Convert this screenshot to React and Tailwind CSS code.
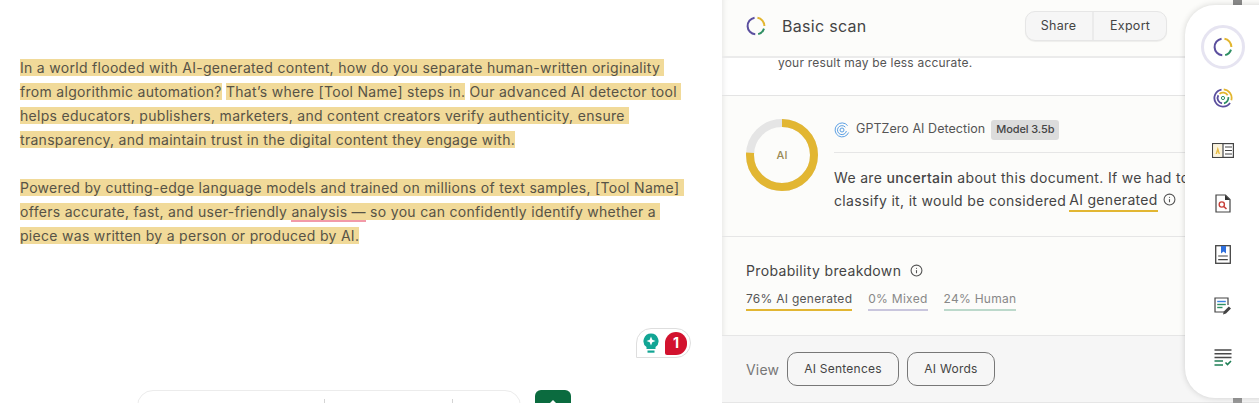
import { Info } from 'lucide-react'

const HL = 'bg-[#f1da99]'

function Arc({ r, c, color, from, to, w }) {
  // 시계 방향 호 (각도는 12시 기준)
  const p = (a) => {
    const t = ((a - 90) * Math.PI) / 180
    return `${c + r * Math.cos(t)} ${c + r * Math.sin(t)}`
  }
  return <path d={`M${p(from)} A${r} ${r} 0 ${to - from > 180 ? 1 : 0} 1 ${p(to)}`} fill="none" stroke={color} strokeWidth={w} />
}

function RingLogo({ size = 20 }) {
  return (
    <svg width={size} height={size} viewBox="0 0 20 20">
      <Arc c={10} r={8.4} w={2} color="#e3b62f" from={10} to={90} />
      <Arc c={10} r={8.4} w={2} color="#2f8f63" from={108} to={165} />
      <Arc c={10} r={8.4} w={2} color="#5b4f9e" from={185} to={350} />
    </svg>
  )
}

function Donut() {
  return (
    <div className="relative w-[72px] h-[72px] shrink-0">
      <svg width="72" height="72" viewBox="0 0 72 72">
        <circle cx="36" cy="36" r="32" fill="none" stroke="#e5e5e5" strokeWidth="8" />
        <circle cx="36" cy="36" r="32" fill="none" stroke="#e2b632" strokeWidth="8" strokeDasharray="152.8 201.1" transform="rotate(-90 36 36)" />
      </svg>
      <span className="absolute inset-0 flex items-center justify-center text-[11px] font-medium text-[#9a8a55]">AI</span>
    </div>
  )
}

function GptZeroIcon() {
  return (
    <svg width="16" height="16" viewBox="0 0 16 16" fill="none" stroke="#5b9fe3" strokeWidth="1">
      <path d="M13.6 3.6A7 7 0 1 0 14.6 10.5" />
      <path d="M11.4 5.2A4.5 4.5 0 1 0 12.4 9" />
      <circle cx="8" cy="8" r="2" />
    </svg>
  )
}

function ScanIcon() {
  return (
    <svg width="20" height="20" viewBox="0 0 20 20">
      <Arc c={10} r={8.6} w={1.8} color="#e3b62f" from={5} to={105} />
      <Arc c={10} r={8.6} w={1.8} color="#5b4f9e" from={125} to={350} />
      <Arc c={10} r={5.4} w={1.8} color="#5b4f9e" from={190} to={300} />
      <Arc c={10} r={5.4} w={1.8} color="#e3b62f" from={320} to={420} />
      <Arc c={10} r={5.4} w={1.8} color="#2f8f63" from={80} to={170} />
      <circle cx="10" cy="10" r="1.6" fill="none" stroke="#2f8f63" strokeWidth="1" />
    </svg>
  )
}

function ReaderIcon() {
  return (
    <svg width="22" height="15" viewBox="0 0 22 15" fill="none">
      <rect x="0.6" y="0.6" width="20.8" height="13.8" stroke="#444" strokeWidth="1.2" />
      <rect x="1.2" y="1.2" width="9" height="12.6" fill="#fbf3dc" />
      <path d="M11 0.6V14.4" stroke="#444" strokeWidth="1.2" />
      <path d="M3.5 11L5.8 3.8L8 11H6.6L5.8 8.6L5 11Z" fill="#e8bd45" />
      <path d="M13 4H20M13 7.5H20M13 11H20" stroke="#444" strokeWidth="1.1" />
    </svg>
  )
}

function PlagiarismIcon() {
  return (
    <svg width="16" height="19" viewBox="0 0 16 19" fill="none">
      <path d="M1 1H10.5L15 5.5V18H1Z" stroke="#444" strokeWidth="1.2" />
      <path d="M10 1L15 6H10Z" fill="#333" />
      <circle cx="6.8" cy="10.5" r="2.6" stroke="#c8403a" strokeWidth="1.4" />
      <path d="M8.8 12.5L11.5 15" stroke="#c8403a" strokeWidth="1.6" />
    </svg>
  )
}

function CiteIcon() {
  return (
    <svg width="16" height="19" viewBox="0 0 16 19" fill="none">
      <rect x="0.7" y="0.7" width="14.6" height="17.6" stroke="#444" strokeWidth="1.3" />
      <path d="M6 1H11V8.5L8.5 6.5L6 8.5Z" fill="#2f6fdc" />
      <path d="M3.2 11H12.8M3.2 14.6H12.8" stroke="#444" strokeWidth="1.2" />
    </svg>
  )
}

function WriteIcon() {
  return (
    <svg width="18" height="19" viewBox="0 0 18 19" fill="none">
      <path d="M10 15H1V1H14V8" stroke="#444" strokeWidth="1.2" />
      <path d="M3.2 4.5H11.8" stroke="#3b82e0" strokeWidth="1.4" />
      <path d="M3.2 7.5H11.8" stroke="#2f8f63" strokeWidth="1.4" />
      <path d="M3.2 10.5H8.5" stroke="#2f8f63" strokeWidth="1.4" />
      <path d="M9 17.5L9.8 14.5L14.8 9.5L17 11.6L12 16.6Z" fill="#444" />
    </svg>
  )
}

function ListCheckIcon() {
  return (
    <svg width="18" height="18" viewBox="0 0 18 18" fill="none">
      <path d="M0.5 1H17.5M0.5 4.7H17.5M0.5 8.4H17.5" stroke="#4a4a4a" strokeWidth="1.5" />
      <path d="M0.5 12H9M0.5 16H9" stroke="#1f7f55" strokeWidth="1.7" />
      <path d="M11.5 13.5L13.5 15.5L17 12" stroke="#1f7f55" strokeWidth="1.6" />
    </svg>
  )
}

function Sidebar() {
  return (
    <div className="absolute left-[1185px] top-[5px] bottom-[5px] w-[90px] bg-white rounded-l-[30px] shadow-[0_0_6px_rgba(0,0,0,0.16)] flex flex-col">
      <div className="w-[76px] flex flex-col items-center pt-[20px]">
        <div className="w-[44px] h-[44px] rounded-full border-[3px] border-[#e6e4f1] flex items-center justify-center">
          <RingLogo />
        </div>
        <div className="mt-[19px] h-[20px] flex items-center"><ScanIcon /></div>
        <div className="mt-[35px] h-[15px] flex items-center"><ReaderIcon /></div>
        <div className="mt-[36px] h-[19px] flex items-center"><PlagiarismIcon /></div>
        <div className="mt-[32px] h-[19px] flex items-center"><CiteIcon /></div>
        <div className="mt-[33px] h-[19px] flex items-center"><WriteIcon /></div>
        <div className="mt-[33px] h-[18px] flex items-center"><ListCheckIcon /></div>
      </div>
    </div>
  )
}

function Editor() {
  return (
    <div className="relative w-[722px] shrink-0 bg-white pt-[56px] pl-[20px] text-[14px] leading-[24px] tracking-[0.3px] text-[#575346] whitespace-pre">
      <div><span className={HL}>In a world flooded with AI-generated content, how do you separate human-written originality </span></div>
      <div><span className={HL}>from algorithmic automation?</span> <span className={HL}>That’s where [Tool Name] steps in.</span> <span className={HL}>Our advanced AI detector tool </span></div>
      <div><span className={HL}>helps educators, publishers, marketers, and content creators verify authenticity, ensure </span></div>
      <div><span className={HL}>transparency, and maintain trust in the digital content they engage with.</span></div>
      <div className="mt-[24px]"><span className={HL}>Powered by cutting-edge language models and trained on millions of text samples, [Tool Name] </span></div>
      <div><span className={HL}>offers accurate, fast, and user-friendly <span className="border-b-2 border-[#f29aa8]">analysis —</span> so you can confidently identify whether a </span></div>
      <div><span className={HL}>piece was written by a person or produced by AI.</span></div>

      {/* 제안 배지 */}
      <div className="absolute left-[636px] top-[328px] w-[55px] h-[30px] bg-white border border-[#dedede] rounded-t-[15px] rounded-br-[15px] flex items-center pl-[6px] gap-[6px]">
        <svg width="16" height="21" viewBox="0 0 16 21">
          <path d="M8 0.5A7.5 7.5 0 0 1 12.5 14V16H3.5V14A7.5 7.5 0 0 1 8 0.5Z" fill="#12a594" />
          <path d="M8 3.5L9.3 6.7L12.5 8L9.3 9.3L8 12.5L6.7 9.3L3.5 8L6.7 6.7Z" fill="#fff" />
          <rect x="4.5" y="17.5" width="7" height="2.2" fill="#12a594" />
        </svg>
        <span className="w-[22px] h-[23px] bg-[#d2122e] rounded-t-[11px] rounded-br-[11px] rounded-bl-[2px] text-white text-[14px] font-bold flex items-center justify-center tracking-normal">1</span>
      </div>

      {/* 하단 툴바 */}
      <div className="absolute left-[137px] top-[390px] w-[384px] h-[40px] bg-white border border-[#ececec] rounded-[16px] flex items-start pt-[8px]">
        <div className="ml-[186px] w-px h-[10px] bg-[#d4d4d4]" />
        <div className="ml-[127px] w-px h-[10px] bg-[#d4d4d4]" />
      </div>
      <div className="absolute left-[535px] top-[390px] w-[36px] h-[36px] bg-[#0b6b3f] rounded-[6px] flex justify-center pt-[10px]">
        <div className="w-0 h-0 border-x-[4px] border-x-transparent border-b-[4px] border-b-white" />
      </div>
    </div>
  )
}

function Panel() {
  return (
    <div className="flex-1 flex flex-col bg-[#fcfcfa] text-[#444] shadow-[inset_6px_0_6px_-6px_rgba(0,0,0,0.12)] overflow-hidden">
      {/* 상단 바 */}
      <div className="h-[58px] shrink-0 border-b-2 border-[#ebebeb] flex items-center pl-[24px] pb-[4px]">
        <RingLogo />
        <h1 className="ml-[16px] text-[16px] tracking-[0.3px] text-[#444] font-normal">Basic scan</h1>
        <div className="ml-[158px] flex h-[30px] rounded-[10px] border border-[#e6e6e6] bg-[#f6f6f6] text-[12.5px] tracking-[0.3px] shadow-[0_1px_1px_rgba(0,0,0,0.06)]">
          <span className="w-[68px] flex items-center justify-center border-r-2 border-[#ebebeb]">Share</span>
          <span className="w-[72px] pl-px flex items-center justify-center">Export</span>
        </div>
      </div>

      <div className="h-[38px] shrink-0 bg-white border-b border-[#e4e4e4] pl-[56px] text-[12px] leading-[10px] tracking-[0.2px] text-[#555] shadow-[inset_6px_0_6px_-6px_rgba(0,0,0,0.12)]">
        your result may be less accurate.
      </div>

      {/* 탐지 결과 */}
      <div className="h-[141px] shrink-0 border-b border-[#e6e6e6] pl-[24px] flex items-start pt-[23px]">
        <Donut />
        <div className="ml-[16px] w-[600px]">
          <div className="h-[24px] pb-[3px] flex items-center">
            <GptZeroIcon />
            <span className="ml-[6px] text-[12.5px] tracking-[0.05px] text-[#555]">GPTZero AI Detection</span>
            <span className="ml-[6px] px-[5px] h-[20px] flex items-center rounded-[3px] bg-[#dcdcdc] text-[11px] font-medium tracking-[-0.1px] text-[#444]">Model 3.5b</span>
          </div>
          <div className="mt-[9px] border-t border-[#e6e6e6] pt-[13px] text-[14px] leading-[24px] tracking-[0.33px]">
            <div>We are <span className="font-medium">uncertain</span> about this document. If we had to</div>
            <div className="flex items-center -mt-px">
              classify it, it would be considered
              <span className="ml-[3px] leading-[20px] border-b-2 border-[#e2b632] tracking-[0.3px]">AI generated</span>
              <Info className="ml-[5px] -mt-[3px] w-[13px] h-[13px] text-[#555]" />
            </div>
          </div>
        </div>
      </div>

      {/* 확률 */}
      <div className="h-[99px] shrink-0 pl-[24px] pt-[23px] border-b border-[#e6e6e6]">
        <div className="flex items-center text-[14px] tracking-[0.35px] h-[21px]">
          Probability breakdown
          <Info className="ml-[9px] w-[13px] h-[13px] text-[#555]" />
        </div>
        <div className="mt-[9px] flex gap-[16px] text-[12px] tracking-[0.27px] leading-[18px]">
          <span className="pb-[1px] border-b-2 border-[#e2b632] text-[#555]">76% AI generated</span>
          <span className="pb-[1px] border-b-2 border-[#c9c6dd] text-[#888]">0% Mixed</span>
          <span className="pb-[1px] border-b-2 border-[#bcd9cb] text-[#888]">24% Human</span>
        </div>
      </div>

      {/* 보기 */}
      <div className="flex-1 bg-[#f6f6f6] pl-[24px] pt-[16px] flex items-start border-b border-[#e6e6e6]">
        <span className="w-[41px] h-[34px] flex items-center text-[14px] tracking-[0.2px] text-[#777]">View</span>
        <button className="h-[34px] w-[112px] rounded-[10px] border border-[#777] text-[12px] tracking-[0.25px]">AI Sentences</button>
        <button className="ml-[8px] h-[34px] w-[88px] rounded-[10px] border border-[#777] text-[12px] tracking-[0.25px]">AI Words</button>
      </div>
    </div>
  )
}

export default function App() {
  return (
    <div className="relative flex w-[1259px] h-[403px] overflow-hidden font-['Inter',sans-serif]">
      <Editor />
      <Panel />
      {/* 사이드바 뒤 스크롤바 */}
      <div className="absolute left-[1233px] top-0 w-[9px] h-[5px] bg-[#8a8a8a]" />
      <div className="absolute left-[1233px] bottom-0 w-[9px] h-[5px] bg-[#999]" />
      <Sidebar />
    </div>
  )
}
